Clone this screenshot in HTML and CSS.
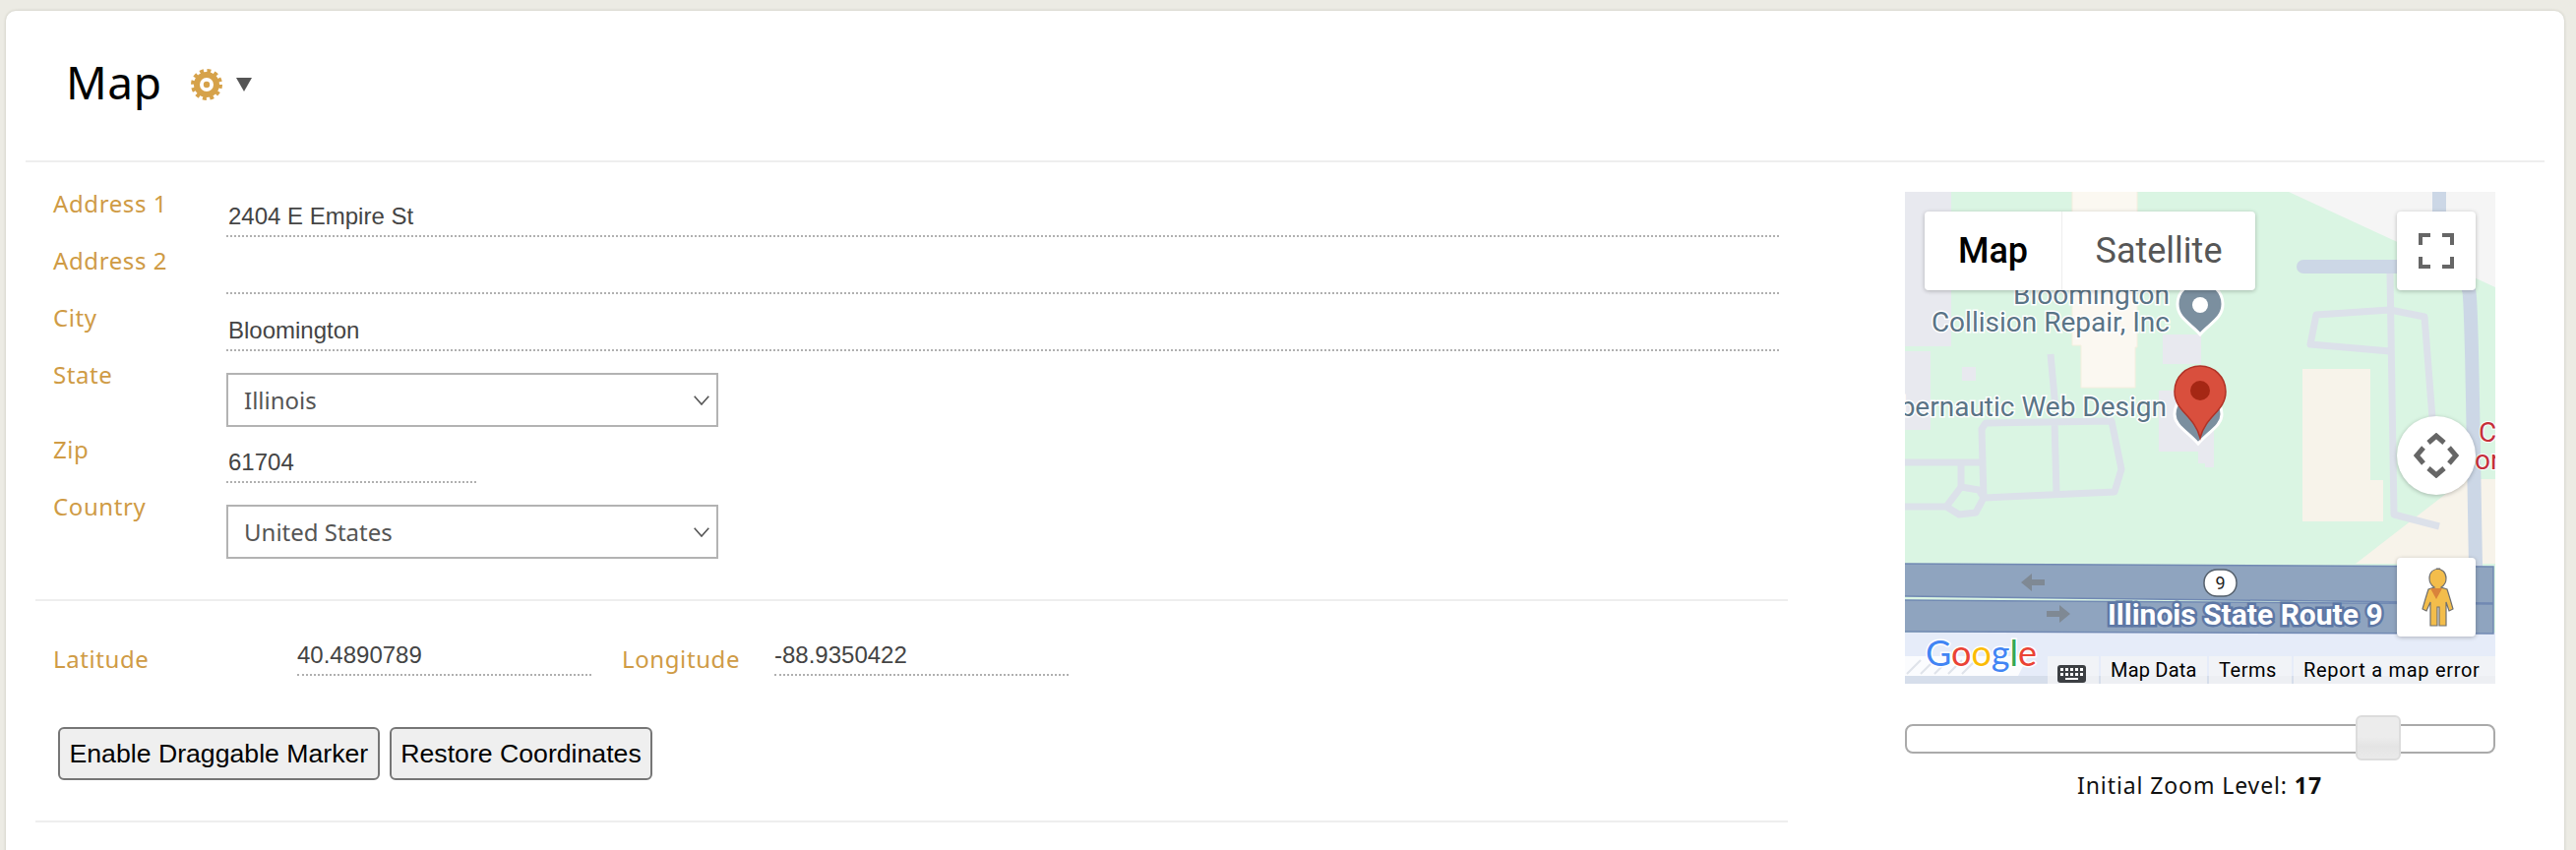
FILE: index.html
```html
<!DOCTYPE html>
<html lang="en">
<head>
<meta charset="utf-8">
<title>Map</title>
<link rel="stylesheet" href="styles.css">
</head>
<body>
<main class="card">
  <header class="head">
    <h1 class="title">Map</h1>
    <svg class="gear" viewBox="0 0 32 32" width="32" height="32"><circle cx="16" cy="16" r="14" fill="none" stroke="#d6a24a" stroke-width="4" stroke-dasharray="3.900 3.430"/><circle cx="16" cy="16" r="13" fill="#d6a24a"/><circle cx="16" cy="16" r="7" fill="#fff"/><circle cx="16" cy="16" r="3.200" fill="#d6a24a"/></svg>
    <svg class="caret" viewBox="0 0 16 14" width="16" height="14"><path fill="#555" d="M0 0h16L8 14z"/></svg>
  </header>
  <div class="columns">
    <section class="form">
      <div class="row"><label class="label">Address 1</label><input class="field wide" type="text" value="2404 E Empire St"></div>
      <div class="row"><label class="label">Address 2</label><input class="field wide" type="text" value=""></div>
      <div class="row"><label class="label">City</label><input class="field wide" type="text" value="Bloomington"></div>
      <div class="row row-select"><label class="label">State</label>
        <div class="select-wrap"><select class="select"><option>Illinois</option></select><svg class="chev" viewBox="0 0 16 10" width="16" height="10"><path d="M.7.7 8 9 15.300.7" fill="none" stroke="#555" stroke-width="1.600"/></svg></div>
      </div>
      <div class="row"><label class="label">Zip</label><input class="field zip" type="text" value="61704"></div>
      <div class="row row-select last"><label class="label">Country</label>
        <div class="select-wrap"><select class="select"><option>United States</option></select><svg class="chev" viewBox="0 0 16 10" width="16" height="10"><path d="M.7.7 8 9 15.300.7" fill="none" stroke="#555" stroke-width="1.600"/></svg></div>
      </div>
      <hr class="rule">
      <div class="coords">
        <label class="label lat-label">Latitude</label><input class="field coord" type="text" value="40.4890789">
        <label class="label lng-label">Longitude</label><input class="field coord" type="text" value="-88.9350422">
      </div>
      <div class="actions">
        <button class="btn" type="button">Enable Draggable Marker</button>
        <button class="btn" type="button">Restore Coordinates</button>
      </div>
      <hr class="rule">
    </section>
    <aside class="side">
      <div class="map">
        <svg class="base" viewBox="0 0 600 500" width="600" height="500">
          <rect width="600" height="500" fill="#daf5e3"/>
          <path fill="#f5f5f5" d="M390 0H600V97z"/>
          <g fill="#e8e9ef">
            <rect width="47" height="157"/><rect y="162" width="26" height="80"/><rect x="58" y="178" width="14" height="14"/>
            <rect x="262" y="145" width="39" height="30"/><path d="M258 202h40v62h-40zM298 240h16v40h-9v-4h-7z"/>
          </g>
          <path fill="#fbf8f1" stroke="#f6efdf" d="M170-2h66v160h-2v41h-55v-43h-9z"/>
          <path fill="#f7f3ea" d="M404 180h69v113h13v42h-82zM458 378l111-86h31v86z"/>
          <g fill="none" stroke="#dce1ea" stroke-width="7" stroke-linejoin="round">
            <path d="M-2 275h80M82 235l128-2 10 49-7 23-133 6-2-70zM152 233l2 74"/>
            <path d="M57 275v25l-15 20H-2M57 300l18 3 5 8-8 15-17 2-13-8"/>
            <path d="M148 165l5 55"/>
            <path d="M493 83l4 245 46 12"/>
            <path d="M493 162l-81-7 6-30 75-5 35 7 8 103"/>
          </g>
          <g fill="none" stroke="#ccd7e6" stroke-width="14" stroke-linecap="round">
            <path d="M543-5v30M573 100c3 2 5 180 7 280"/><path d="M405 76h100"/>
          </g>
          <rect y="448" width="600" height="52" fill="#e6ecf9"/>
          <path fill="#8fa4bf" stroke="#7189b3" stroke-width="1.500" d="M-2 378l600 3v37l-600-7zM-2 415l600 4v30l-600-2z"/>
          <path fill="#7f8994" d="M118 397l11-9v6h13v6h-13v6zM168 429l-11-9v6h-13v6h13v6z"/>
          <rect x="304" y="384" width="33" height="27" rx="13" fill="#fff" stroke="#55606c" stroke-width="1.500"/>
          <text class="shield" x="320.500" y="404" text-anchor="middle">9</text>
          <text class="route" x="206" y="440">Illinois State Route 9</text>
          <text class="poi" x="269" y="114" text-anchor="end">Bloomington</text>
          <text class="poi" x="269" y="142" text-anchor="end">Collision Repair, Inc</text>
          <text class="poi" x="266" y="228" text-anchor="end">Cybernautic Web Design</text>
          <text class="poi-red" x="583" y="254">C</text>
          <text class="poi-red" x="579" y="282">or</text>
          <path fill="#7b8f9f" stroke="#fff" stroke-width="3" d="M300 92c13 0 23 10 23 22 0 15-14 20-23 31-9-11-23-16-23-31 0-12 10-22 23-22z"/>
          <circle cx="300" cy="115" r="8" fill="#fff"/>
          <path fill="#7b8f9f" stroke="#fff" stroke-width="3" d="M298 205c13 0 24 9 24 21 0 12-14 18-24 30-10-12-24-18-24-30 0-12 11-21 24-21z"/>
          <path fill="#d94f3d" stroke="#b03226" stroke-width="1.500" d="M300 177c14 0 26 11 26 26 0 20-20 24-26 47-6-23-26-27-26-47 0-15 12-26 26-26z"/>
          <circle cx="300" cy="202" r="10" fill="#a52714"/>
          <path fill="#fbfcfe" d="M0 472h125l-10 20H0z"/>
          <path stroke="#dfe3ea" stroke-width="2" d="M2 490l14-14M16 490l14-14M30 490l14-14M44 490l14-14M58 490l14-14"/>
          <path fill="#cfd9e6" d="M0 492h600v8H0z" opacity=".7"/>
          <text class="logo" x="21" y="482"><tspan fill="#4285f4">G</tspan><tspan fill="#ea4335">o</tspan><tspan fill="#fbbc05">o</tspan><tspan fill="#4285f4">g</tspan><tspan fill="#34a853">l</tspan><tspan fill="#ea4335">e</tspan></text>
        </svg>
        <div class="maptype">
          <span class="mt mt-on">Map</span><span class="mt mt-off">Satellite</span>
        </div>
        <div class="ctl fullscreen">
          <svg viewBox="0 0 36 36" width="36" height="36"><path fill="none" stroke="#666" stroke-width="4" d="M2 12V2h10M24 2h10v10M34 24v10H24M12 34H2V24"/></svg>
        </div>
        <div class="ctl rotate">
          <svg viewBox="0 0 46 46" width="46" height="46"><path fill="none" stroke="#666" stroke-width="5" d="M15 10l8-7 8 7M15 36l8 7 8-7M10 15l-7 8 7 8M36 15l7 8-7 8"/></svg>
        </div>
        <div class="ctl pegman">
          <svg viewBox="0 0 36 60" width="36" height="60"><path fill="#f3bd4b" stroke="#6f6f6f" stroke-width="1.200" d="M18 1c6 0 10 4 10 10 0 4-2 7-5 9l6 2c2 6 4 13 6 20l-4 2-3-9v24h-7V40h-2v19H12V35l-4 9-4-2c2-7 4-14 6-20l6-2c-3-2-5-5-5-9 0-6 4-10 11-10z"/><path fill="#d9833b" d="M12 21h12l-6 11z"/></svg>
        </div>
        <div class="mapfoot">
          <span class="fitem kbd"><svg viewBox="0 0 29 18" width="29" height="18"><rect width="29" height="18" rx="3" fill="#3c3f43"/><path fill="#fff" d="M3 3h3v3H3zM8 3h3v3H8zM13 3h3v3h-3zM18 3h3v3h-3zM23 3h3v3h-3zM3 8h3v3H3zM8 8h3v3H8zM13 8h3v3h-3zM18 8h3v3h-3zM23 8h3v3h-3zM8 13h13v2H8z"/></svg></span>
          <span class="fitem f-data">Map Data</span>
          <span class="fitem f-terms">Terms</span>
          <span class="fitem f-report">Report a map error</span>
        </div>
      </div>
      <div class="slider"><span class="thumb"></span></div>
      <p class="zoom">Initial Zoom Level: <b>17</b></p>
    </aside>
  </div>
</main>
</body>
</html>
```

FILE: styles.css
```css
* { box-sizing: border-box; }
html, body { height: 100%; }
body {
  margin: 0;
  background: #ecebe4;
  overflow: hidden;
  font-family: "Noto Sans", "Open Sans", sans-serif;
}
.card {
  margin: 11px 12px 0 6px;
  height: 900px;
  background: #fff;
  border-radius: 10px;
  padding: 0 20px;
  box-shadow: 0 0 3px rgba(80, 80, 60, .25);
}
.head {
  display: flex;
  align-items: center;
  height: 154px;
  padding: 0 0 8px 40px;
  border-bottom: 2px solid #eee;
}
.title {
  margin: 0 0 0 1px;
  font-size: 46px;
  font-weight: 400;
  letter-spacing: .6px;
  color: #000;
  line-height: 76px;
}
.gear { margin-left: 29px; margin-top: 5px; }
.caret { margin-left: 14px; margin-top: 5px; }
.columns { display: flex; }
.form { width: 1781px; margin-left: 10px; padding-top: 18px; }
.row { display: flex; align-items: flex-start; padding-left: 18px; height: 58px; }
.row-select { height: 76px; }
.row-select.last { height: 118px; }
.label {
  font-size: 24px;
  line-height: 48px;
  color: #cf9b45;
  letter-spacing: .6px;
  width: 176px;
  flex: none;
}
.field {
  display: block;
  height: 58px;
  padding: 23px 0 6px 2px;
  border: 0;
  border-bottom: 2px dotted #b0b0b0;
  font: 24px/27px "Liberation Sans", Arial, sans-serif;
  color: #444;
  background: transparent;
  outline: 0;
}
.wide { width: 1578px; }
.zip { width: 254px; }
.coord { width: 299px; padding-left: 0; }
.select-wrap { position: relative; width: 500px; height: 55px; margin-top: 22px; }
.select {
  appearance: none;
  width: 100%;
  height: 100%;
  border: 2px solid #b3b3b3;
  border-radius: 0;
  background: #fff;
  padding: 0 0 0 16px;
  font: 24px "Noto Sans", "Open Sans", sans-serif;
  color: #555;
}
.chev { position: absolute; right: 9px; top: 23px; }
.rule { margin: 0; border: 0; height: 2px; background: #eee; }
.coords { display: flex; align-items: flex-start; padding: 18px 0 0 18px; height: 110px; }
.coords .label { margin-top: 17px; }
.lat-label { width: 248px; }
.lng-label { width: 155px; margin-left: 31px; }
.actions { display: flex; gap: 10px; padding: 18px 0 0 23px; height: 113px; }
.btn {
  height: 54px;
  padding: 0 9.5px;
  border: 2px solid #767676;
  border-radius: 6px;
  background: #efefef;
  font: 26.67px "Liberation Sans", Arial, sans-serif;
  color: #000;
  white-space: nowrap;
}
.side { width: 600px; margin-left: 119px; padding-top: 30px; }
.map { position: relative; width: 600px; height: 500px; overflow: hidden; }
.base { display: block; }
.poi, .poi-red, .route, .shield { font-family: Roboto, sans-serif; }
.poi {
  font-size: 28px;
  fill: #5a7486;
  stroke: #fff;
  stroke-width: 3px;
  paint-order: stroke;
}
.poi-red { font-size: 28px; fill: #c5303a; stroke: #fff; stroke-width: 2px; paint-order: stroke; }
.route {
  font-size: 30px;
  font-weight: 700;
  fill: #fff;
  stroke: #5d77a5;
  stroke-width: 5px;
  paint-order: stroke;
}
.shield { font-size: 18px; fill: #222; }
.logo {
  font-family: Lato, "Open Sans", sans-serif;
  font-size: 36px;
  stroke: #fff;
  stroke-width: 3px;
  paint-order: stroke;
}
.maptype {
  position: absolute;
  left: 20px;
  top: 20px;
  display: flex;
  height: 80px;
  background: #fff;
  border-radius: 4px;
  box-shadow: 0 1px 4px rgba(0, 0, 0, .25);
  font: 36px/80px Roboto, sans-serif;
}
.mt { text-align: center; }
.mt-on { width: 139px; color: #000; font-weight: 500; }
.mt-off { width: 197px; color: #565656; border-left: 1px solid #eee; }
.ctl {
  position: absolute;
  left: 500px;
  width: 80px;
  height: 80px;
  display: flex;
  align-items: center;
  justify-content: center;
  background: #fff;
  border-radius: 4px;
  box-shadow: 0 1px 4px rgba(0, 0, 0, .25);
}
.fullscreen { top: 20px; }
.rotate { top: 228px; border-radius: 50%; }
.pegman { top: 372px; }
.mapfoot {
  position: absolute;
  left: 145px;
  right: 0;
  bottom: 0;
  height: 28px;
  display: flex;
  gap: 2px;
  font: 20px/28px Roboto, sans-serif;
  letter-spacing: .55px;
  color: #000;
}
.fitem { background: rgba(245, 245, 245, .72); flex: none; height: 28px; white-space: nowrap; }
.kbd { width: 52px; padding: 6px 0 0 10px; }
.f-data { width: 108px; padding-left: 10px; letter-spacing: .2px; }
.f-terms { width: 84px; padding-left: 10px; }
.f-report { flex: 1; padding-left: 10px; letter-spacing: .7px; }
.slider {
  position: relative;
  width: 600px;
  height: 30px;
  margin-top: 41px;
  border: 2px solid #aaa;
  border-radius: 8px;
  background: #fff;
}
.thumb {
  position: absolute;
  left: 456px;
  top: -11px;
  width: 46px;
  height: 46px;
  border: 2px solid #dcdcdc;
  border-radius: 6px;
  background: linear-gradient(#ececec 0 48%, #e4e4e4 70%, #eaeaea);
}
.zoom {
  margin: 12px 0 0;
  text-align: center;
  font-size: 23px;
  line-height: 40px;
  letter-spacing: .9px;
  color: #111;
  padding-right: 1px;
}
.zoom b { font-weight: 700; }
```
